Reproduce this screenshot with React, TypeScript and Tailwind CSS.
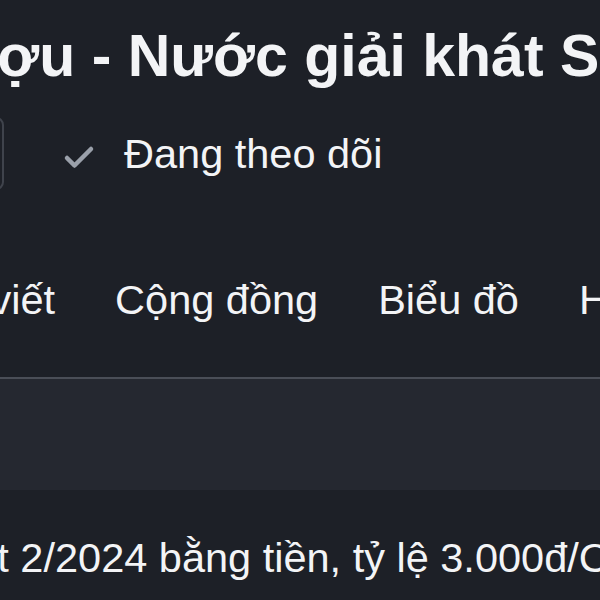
import { Check } from "lucide-react";

const tabs = ["Bài viết", "Cộng đồng", "Biểu đồ", "Hồ sơ"];

const App = () => {
  return (
    <div className="w-[600px] h-[600px] overflow-hidden bg-[#1d2027] text-[#f3f4f6] font-['Liberation_Sans',Arial,sans-serif]">
      {/* title */}
      <h1 className="whitespace-nowrap text-[59px] font-bold leading-none pt-[27px] ml-[-88px]">
        Rượu - Nước giải khát Sài Gòn
      </h1>

      {/* follow row */}
      <div className="flex items-center mt-[31px] h-[73px]">
        <button className="shrink-0 w-[80px] h-[73px] ml-[-76px] rounded-lg border-2 border-[#3f434c]" />
        <Check
          className="shrink-0 ml-[57px] mt-[9px] text-[#9aa0aa]"
          size={36}
          strokeWidth={3}
        />
        <span className="ml-[27px] whitespace-nowrap text-[41.5px] leading-none">Đang theo dõi</span>
      </div>

      {/* tabs */}
      <nav className="flex gap-[60px] whitespace-nowrap ml-[-81px] pt-[89px] pb-[56px] text-[41.5px] leading-none">
        {tabs.map((tab) => (
          <a key={tab} className="shrink-0">
            {tab}
          </a>
        ))}
      </nav>

      <div className="border-t-2 border-[#4a4e57] h-[113px] bg-[#252830]" />

      <p className="whitespace-nowrap text-[41.5px] leading-none mt-[47px] ml-[-53px]">
        đợt 2/2024 bằng tiền, tỷ lệ 3.000đ/CP
      </p>
    </div>
  );
};

export default App;
